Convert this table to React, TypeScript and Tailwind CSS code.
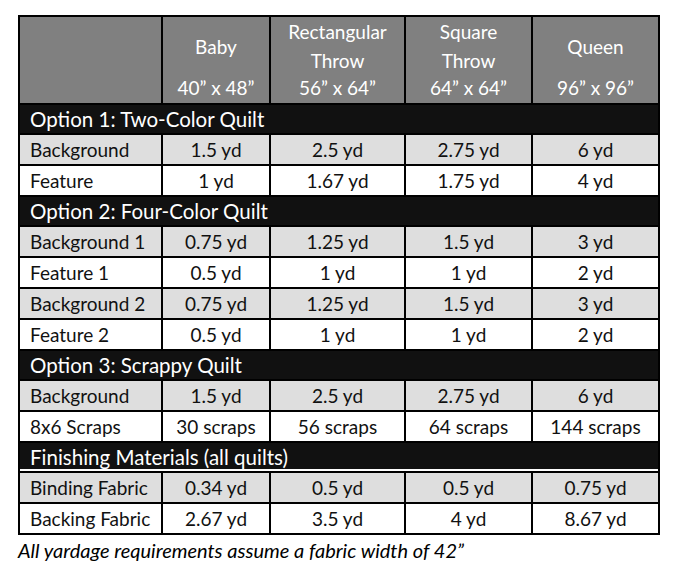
const font = { fontFamily: "Lato, 'Open Sans', sans-serif" };

type Row = { label: string; values: string[]; shade?: boolean };
type Section = { title: string; rows: Row[]; gap?: boolean };

const sections: Section[] = [
  {
    title: "Option 1: Two-Color Quilt",
    rows: [
      { label: "Background", values: ["1.5 yd", "2.5 yd", "2.75 yd", "6 yd"], shade: true },
      { label: "Feature", values: ["1 yd", "1.67 yd", "1.75 yd", "4 yd"] },
    ],
  },
  {
    title: "Option 2: Four-Color Quilt",
    rows: [
      { label: "Background 1", values: ["0.75 yd", "1.25 yd", "1.5 yd", "3 yd"], shade: true },
      { label: "Feature 1", values: ["0.5 yd", "1 yd", "1 yd", "2 yd"] },
      { label: "Background 2", values: ["0.75 yd", "1.25 yd", "1.5 yd", "3 yd"], shade: true },
      { label: "Feature 2", values: ["0.5 yd", "1 yd", "1 yd", "2 yd"] },
    ],
  },
  {
    title: "Option 3: Scrappy Quilt",
    rows: [
      { label: "Background", values: ["1.5 yd", "2.5 yd", "2.75 yd", "6 yd"], shade: true },
      { label: "8x6 Scraps", values: ["30 scraps", "56 scraps", "64 scraps", "144 scraps"] },
    ],
  },
  {
    title: "Finishing Materials (all quilts)",
    gap: true,
    rows: [
      { label: "Binding Fabric", values: ["0.34 yd", "0.5 yd", "0.5 yd", "0.75 yd"], shade: true },
      { label: "Backing Fabric", values: ["2.67 yd", "3.5 yd", "4 yd", "8.67 yd"] },
    ],
  },
];

const sizes = [
  { name: ["Baby"], dims: "40\u201D x 48\u201D" },
  { name: ["Rectangular", "Throw"], dims: "56\u201D x 64\u201D" },
  { name: ["Square", "Throw"], dims: "64\u201D x 64\u201D" },
  { name: ["Queen"], dims: "96\u201D x 96\u201D" },
];

const HeaderCell = ({ name, dims }: { name: string[]; dims: string }) => {
  return (
    <th className="border-2 border-black bg-[#808080] p-0 align-top font-normal text-white">
      <div className="flex h-[58px] flex-col items-center justify-center leading-[29px]">
        {name.map((n) => (
          <span key={n}>{n}</span>
        ))}
      </div>
      <div className="flex h-[27px] items-center justify-center">{dims}</div>
    </th>
  );
};

export default function App() {
  return (
    <main className="min-h-screen bg-white pl-[18px] pt-[15px] text-[19px] text-[#111]" style={font}>
      <table className="w-[640px] table-fixed border-collapse">
        <colgroup>
          <col className="w-[143px]" />
          <col className="w-[108px]" />
          <col className="w-[135px]" />
          <col className="w-[127px]" />
          <col className="w-[127px]" />
        </colgroup>
        <thead>
          <tr className="h-[88px]">
            <th className="border-2 border-black bg-[#808080] p-0" />
            {sizes.map((s) => (
              <HeaderCell key={s.dims} name={s.name} dims={s.dims} />
            ))}
          </tr>
        </thead>
        <tbody>
          {sections.map((section) => (
            <>
              <tr key={section.title} className="h-[30px]">
                <td
                  colSpan={5}
                  className={
                    "border-2 border-black bg-[#111] px-[10px] py-0 text-[20.5px] leading-none text-white" +
                    (section.gap ? " shadow-[inset_0_-2px_0_#fff]" : "")
                  }
                >
                  {section.title}
                </td>
              </tr>
              {section.rows.map((row) => (
                <tr
                  key={section.title + row.label}
                  className={"h-[31px] " + (row.shade ? "bg-[#dedede]" : "bg-white")}
                >
                  <td className="whitespace-nowrap border-2 border-black px-[10px] py-0 leading-none">
                    {row.label}
                  </td>
                  {row.values.map((v, i) => (
                    <td
                      key={i}
                      className="whitespace-nowrap border-2 border-black px-1 py-0 text-center leading-none"
                    >
                      {v}
                    </td>
                  ))}
                </tr>
              ))}
            </>
          ))}
        </tbody>
      </table>
      <p className="mt-[2px] text-[20px] leading-[26px] italic text-black">
        All yardage requirements assume a fabric width of 42{"\u201D"}
      </p>
    </main>
  );
}
